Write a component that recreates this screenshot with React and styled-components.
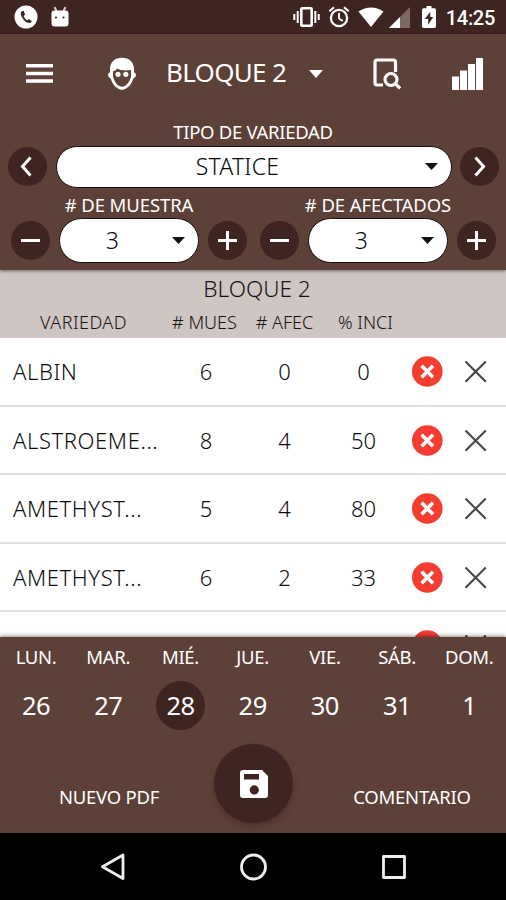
import styled, { createGlobalStyle } from "styled-components";

const rows = [
    { name: 'ALBIN', samples: 6, affected: 0, incidence: 0 },
    { name: 'ALSTROEME...', samples: 8, affected: 4, incidence: 50 },
    { name: 'AMETHYST...', samples: 5, affected: 4, incidence: 80 },
    { name: 'AMETHYST...', samples: 6, affected: 2, incidence: 33 },
    { name: '', samples: '', affected: '', incidence: '' }
];

const days = [
    { name: 'LUN.', number: 26 },
    { name: 'MAR.', number: 27 },
    { name: 'MIÉ.', number: 28, selected: true },
    { name: 'JUE.', number: 29 },
    { name: 'VIE.', number: 30 },
    { name: 'SÁB.', number: 31 },
    { name: 'DOM.', number: 1 }
];

const App = () => {
    return (
        <Screen>
            <GlobalStyle/>
            <StatusBar/>
            <TopPanel>
                <Toolbar/>
                <Caption>TIPO DE VARIEDAD</Caption>
                <VarietyRow>
                    <RoundButton><Glyph d="M22.5 10.5 L14.5 19.5 L22.5 28.5"/></RoundButton>
                    <Select $width={396} $height={42}>
                        <SelectText $shift={6}>STATICE</SelectText>
                        <Caret/>
                    </Select>
                    <RoundButton><Glyph d="M15.5 10.5 L23.5 19.5 L15.5 28.5"/></RoundButton>
                </VarietyRow>
                <CounterRow>
                    <Counter title="# DE MUESTRA" value={3}/>
                    <Counter title="# DE AFECTADOS" value={3}/>
                </CounterRow>
            </TopPanel>
            <VarietyTable/>
            <BottomPanel>
                <Week>
                    {days.map((day) => (
                        <Day key={day.name}>
                            <DayName>{day.name}</DayName>
                            <DayNumber $selected={day.selected}>{day.number}</DayNumber>
                        </Day>
                    ))}
                </Week>
                <Actions>
                    <Action $indent={4}>NUEVO PDF</Action>
                    <SaveButton>
                        <svg width="28" height="28" viewBox="0 0 28 28">
                            <path fill="#fff" fillRule="evenodd" d="M3 0 H22 L28 6 V25 Q28 28 25 28 H3 Q0 28 0 25 V3 Q0 0 3 0 Z M4 4 V9.5 H19 V4 Z M14.3 15.3 A4.6 4.6 0 1 0 14.3 24.5 A4.6 4.6 0 1 0 14.3 15.3 Z"/>
                        </svg>
                    </SaveButton>
                    <Action $indent={25}>COMENTARIO</Action>
                </Actions>
            </BottomPanel>
            <NavigationBar>
                <svg width="26" height="28" viewBox="0 0 26 28"><path d="M23 2 V25.5 L2.5 13.8 Z" {...line}/></svg>
                <svg width="28" height="28" viewBox="0 0 28 28"><circle cx="13.5" cy="14" r="12" {...line}/></svg>
                <svg width="26" height="26" viewBox="0 0 26 26"><rect x="2.5" y="2.5" width="21" height="21" {...line}/></svg>
            </NavigationBar>
        </Screen>
    )
}

const line = { fill: 'none', stroke: '#eee', strokeWidth: 2.8, strokeLinejoin: 'round' };

const StatusBar = () => {
    return (
        <StatusFrame>
            <svg width="24" height="24" viewBox="0 0 24 24">
                <circle cx="12" cy="12" r="11.5" fill="#fff"/>
                <path d="M8.2 6 C6.3 7 6.3 9.3 7.8 12 C10 16 13 18.3 15.7 18 C17 17.8 17.7 16.8 17.7 16 L14.8 14 L13.3 15.3 C11.8 14.5 10.3 12.8 9.6 11 L11 9.7 L9.8 6 Z" fill="#3e2723"/>
            </svg>
            <svg width="18" height="20" viewBox="0 0 18 20">
                <path d="M3.5 0 L5.5 4 M14.5 0 L12.5 4" stroke="#d8cdca" strokeWidth="2"/>
                <rect x="0.5" y="3.5" width="17" height="16" rx="3" fill="#fff"/>
                <circle cx="5" cy="10.5" r="1.1" fill="#3e2723"/>
                <circle cx="12.5" cy="10.5" r="1.1" fill="#3e2723"/>
            </svg>
            <StatusRight>
                <svg width="27" height="22" viewBox="0 0 27 22">
                    <path d="M1.3 8 V14 M4.7 5 V17 M22.3 5 V17 M25.7 8 V14" stroke="#fff" strokeWidth="2"/>
                    <rect x="8.3" y="2.2" width="10.4" height="17.6" rx="1" fill="none" stroke="#fff" strokeWidth="2.6"/>
                </svg>
                <svg width="22" height="22" viewBox="0 0 22 22" fill="none" stroke="#fff">
                    <circle cx="11" cy="12" r="8.1" strokeWidth="2.3"/>
                    <path d="M11 7 V12.5 L14.8 15" strokeWidth="1.9"/>
                    <path d="M1.3 5.3 L6 1.3 M20.7 5.3 L16 1.3" strokeWidth="2.1"/>
                </svg>
                <svg width="26" height="20" viewBox="0 0 26 20"><path d="M0.5 4.6 Q13 -3.8 25.5 4.6 L13 20 Z" fill="#fff"/></svg>
                <svg width="21" height="21" viewBox="0 0 21 21">
                    <path d="M21 0 V21 H0 Z" fill="#7c6a67"/>
                    <path d="M11 10 V21 H0 Z" fill="#fff"/>
                </svg>
                <svg width="14" height="22" viewBox="0 0 14 22">
                    <path d="M4.5 0 H9.5 V2.3 H12.5 Q14 2.3 14 4 V20.3 Q14 22 12.5 22 H1.5 Q0 22 0 20.3 V4 Q0 2.3 1.5 2.3 H4.5 Z" fill="#fff"/>
                    <path d="M8.3 5.8 L2.8 13 H6.2 V18.8 L11.3 11 H8.3 Z" fill="#3e2723"/>
                </svg>
                <Clock>14:25</Clock>
            </StatusRight>
        </StatusFrame>
    )
}

const Toolbar = () => {
    return (
        <ToolbarFrame>
            <svg width="27" height="22" viewBox="0 0 27 22"><path d="M0 2.7 H27 M0 10.4 H27 M0 18.1 H27" stroke="#fff" strokeWidth="3.5"/></svg>
            <FaceIcon width="30" height="34" viewBox="0 0 30 34">
                <path fill="#fff" fillRule="evenodd" d="M15 0.7 C22.5 0.7 27 5.5 27 12 V15.3 Q29 16 29 18 Q29 20.5 26.3 21.5 C25 27 20 32.7 15 32.7 C10 32.7 5 27 3.7 21.5 Q1 20.5 1 18 Q1 16 3 15.3 V12 C3 5.5 7.5 0.7 15 0.7 Z M10 11.5 C9.5 13 8 14 6 14.3 V19.5 C7.5 26 11.5 29.7 15 29.7 C18.5 29.7 22.5 26 24 19.5 V13 C18 14 13 13.3 10 11.5 Z"/>
                <circle cx="11" cy="17.3" r="2.6" fill="#fff"/>
                <circle cx="18.8" cy="17.3" r="2.6" fill="#fff"/>
            </FaceIcon>
            <BlockName>BLOQUE 2</BlockName>
            <svg width="14" height="8" viewBox="0 0 14 8"><path d="M0 0 H14 L7 8 Z" fill="#fff"/></svg>
            <SearchIcon width="28" height="32" viewBox="0 0 28 32" fill="none" stroke="#fff">
                <path d="M10 27 H4 Q2 27 2 25 V4 Q2 2 4 2 H20.5 Q22.5 2 22.5 4 V14" strokeWidth="3.2"/>
                <circle cx="18" cy="21.5" r="6" strokeWidth="3.2"/>
                <path d="M22.3 25.7 L27 30.3" strokeWidth="3.2"/>
            </SearchIcon>
            <svg width="31" height="32" viewBox="0 0 31 32" fill="#fff">
                <rect x="0" y="18.5" width="7" height="13.5"/>
                <rect x="8" y="12.5" width="7" height="19.5"/>
                <rect x="16" y="6" width="7" height="26"/>
                <rect x="24" y="0" width="7" height="32"/>
            </svg>
        </ToolbarFrame>
    )
}

const Glyph = ({ d }) => (
    <svg width="39" height="39" viewBox="0 0 39 39"><path d={d} fill="none" stroke="#fff" strokeWidth="3"/></svg>
)

const Caret = () => (
    <svg width="13" height="7" viewBox="0 0 13 7"><path d="M0 0 H13 L6.5 7 Z" fill="#111"/></svg>
)

const Counter = ({ title, value }) => {
    return (
        <CounterFrame>
            <CounterTitle>{title}</CounterTitle>
            <CounterControls>
                <RoundButton><Glyph d="M10 19.5 H29"/></RoundButton>
                <Select $width={140} $height={45}>
                    <SelectText $shift={7}>{value}</SelectText>
                    <Caret/>
                </Select>
                <RoundButton><Glyph d="M10 19.5 H29 M19.5 10 V29"/></RoundButton>
            </CounterControls>
        </CounterFrame>
    )
}

const VarietyTable = () => {
    return (
        <TableFrame>
            <TableHead>
                <TableTitle>BLOQUE 2</TableTitle>
                <HeadCells>
                    <HeadCell $spacing={0.45}>VARIEDAD</HeadCell>
                    <HeadCell># MUES</HeadCell>
                    <HeadCell># AFEC</HeadCell>
                    <HeadCell>% INCI</HeadCell>
                </HeadCells>
            </TableHead>
            {rows.map((row, i) => (
                <Row key={i}>
                    <NameCell>{row.name}</NameCell>
                    <NumberCell>{row.samples}</NumberCell>
                    <NumberCell>{row.affected}</NumberCell>
                    <NumberCell>{row.incidence}</NumberCell>
                    <svg width="32" height="32" viewBox="0 0 32 32">
                        <circle cx="16.3" cy="16.5" r="15.3" fill="#f43c30"/>
                        <path d="M10.6 10.8 L22 22.2 M22 10.8 L10.6 22.2" stroke="#fff" strokeWidth="3.6"/>
                    </svg>
                    <svg width="24" height="24" viewBox="0 0 24 24"><path d="M2.5 2.5 L22.8 22.8 M22.8 2.5 L2.5 22.8" stroke="#484848" strokeWidth="2.1"/></svg>
                </Row>
            ))}
        </TableFrame>
    )
}

const GlobalStyle = createGlobalStyle`
    * {
        box-sizing: border-box;
    }
    body {
        margin: 0;
        font-family: "Noto Sans", "Open Sans", sans-serif;
    }
    svg {
        display: block;
        flex: none;
    }
    button {
        border: none;
        padding: 0;
        font-family: inherit;
    }
`;

const Screen = styled.div`
    display: flex;
    flex-direction: column;
    width: 506px;
    height: 900px;
    overflow: hidden;
    background: #fff;
`;

const StatusFrame = styled.div`
    display: flex;
    align-items: center;
    flex: none;
    gap: 13px;
    height: 34px;
    padding: 0 11px 0 14px;
    background: #3e2522;
`;

const StatusRight = styled.div`
    display: flex;
    align-items: center;
    gap: 8px;
    margin-left: auto;

    svg:nth-child(4) {
        margin-left: -3px;
    }
    svg:nth-child(5) {
        margin-left: 4px;
    }
`;

const Clock = styled.span`
    width: 51px;
    padding-top: 2px;
    text-align: right;
    color: #fff;
    font: 500 20px/34px Roboto, sans-serif;
    letter-spacing: -0.3px;
`;

const TopPanel = styled.div`
    position: relative;
    z-index: 1;
    flex: none;
    height: 236px;
    background: #5d4037;
    box-shadow: 0 1px 3px rgba(0, 0, 0, 0.5);
`;

const ToolbarFrame = styled.div`
    display: flex;
    align-items: center;
    height: 79px;
    padding: 0 23px 0 26px;

    svg:last-child {
        margin-left: auto;
    }
`;

const FaceIcon = styled.svg`
    margin-left: 54px;
`;

const BlockName = styled.div`
    width: 142px;
    margin-left: 29px;
    margin-right: 1px;
    padding-bottom: 3px;
    color: #fff;
    font-size: 26px;
    letter-spacing: -0.7px;
    white-space: nowrap;
`;

const SearchIcon = styled.svg`
    margin-left: 50px;
`;

const Caption = styled.div`
    height: 33px;
    color: #fff;
    font-size: 18.5px;
    line-height: 38px;
    letter-spacing: -0.3px;
    text-align: center;
`;

const VarietyRow = styled.div`
    display: flex;
    align-items: center;
    justify-content: space-between;
    height: 41px;
    padding: 0 7px 0 8px;
`;

const RoundButton = styled.button`
    flex: none;
    width: 39px;
    height: 39px;
    border-radius: 50%;
    background: #3e2522;
`;

const Select = styled.div`
    display: flex;
    align-items: center;
    width: ${props => props.$width}px;
    height: ${props => props.$height}px;
    padding: 0 13px 0 0;
    border: 1.5px solid #1b0f0c;
    border-radius: 23px;
    background: #fff;
`;

const SelectText = styled.div`
    flex: 1;
    padding-right: ${props => props.$shift}px;
    padding-bottom: 1px;
    color: #080808;
    font-size: 23px;
    font-weight: 300;
    letter-spacing: 0.2px;
    text-align: center;
`;

const CounterRow = styled.div`
    display: flex;
    justify-content: space-between;
    padding: 0 10px 0 11px;
`;

const CounterFrame = styled.div`
    width: 236px;
`;

const CounterTitle = styled.div`
    height: 31px;
    color: #fff;
    font-size: 18.5px;
    line-height: 36px;
    letter-spacing: -0.1px;
    text-align: center;
`;

const CounterControls = styled.div`
    display: flex;
    align-items: center;
    justify-content: space-between;
    height: 45px;
`;

const TableFrame = styled.div`
    flex: none;
    height: 367px;
    overflow: hidden;
`;

const TableHead = styled.div`
    height: 68px;
    background: #cfc5c3;
    color: #151212;
    font-weight: 300;
`;

const TableTitle = styled.div`
    height: 38px;
    padding-left: 8px;
    font-size: 22.5px;
    line-height: 38px;
    letter-spacing: 0;
    text-align: center;
`;

const HeadCells = styled.div`
    display: grid;
    grid-template-columns: 167px 75px 85px 77px;
    line-height: 29px;
`;

const HeadCell = styled.div`
    font-size: 18px;
    letter-spacing: ${props => props.$spacing || 0}px;
    text-align: center;
    white-space: nowrap;
`;

const Row = styled.div`
    display: grid;
    grid-template-columns: 154px 78px 79px 79px 48px 47px;
    align-items: center;
    height: 68.5px;
    padding-left: 13px;
    border-bottom: 2px solid #dfdfdf;
    color: #0c0c0c;
    font-size: 22px;
    font-weight: 300;

    svg {
        justify-self: center;
    }
`;

const NameCell = styled.div`
    letter-spacing: 0.6px;
    white-space: nowrap;
`;

const NumberCell = styled.div`
    text-align: center;
`;

const BottomPanel = styled.div`
    position: relative;
    z-index: 1;
    flex: none;
    height: 196px;
    background: #5d4037;
    box-shadow: 0 -1px 4px rgba(0, 0, 0, 0.45);
    color: #fff;
`;

const Week = styled.div`
    display: grid;
    grid-template-columns: repeat(7, 72.2px);
    height: 107px;
`;

const Day = styled.div`
    display: flex;
    flex-direction: column;
    align-items: center;
`;

const DayName = styled.div`
    height: 44px;
    font-size: 18.5px;
    line-height: 40px;
    letter-spacing: -0.3px;
`;

const DayNumber = styled.div`
    width: 49px;
    height: 49px;
    border-radius: 50%;
    background: ${props => props.$selected ? '#3e2522' : 'transparent'};
    font-size: 25.5px;
    line-height: 49px;
    letter-spacing: -0.5px;
    text-align: center;
`;

const Actions = styled.div`
    display: grid;
    grid-template-columns: 214px 79px 213px;
`;

const Action = styled.div`
    padding-top: 41px;
    padding-left: ${props => props.$indent}px;
    font-size: 18.5px;
    line-height: 24px;
    letter-spacing: -0.25px;
    text-align: center;
`;

const SaveButton = styled.button`
    display: flex;
    align-items: center;
    justify-content: center;
    width: 79px;
    height: 79px;
    border-radius: 50%;
    background: #3e2522;
    box-shadow: 0 3px 6px rgba(0, 0, 0, 0.22);
`;

const NavigationBar = styled.div`
    display: flex;
    align-items: center;
    justify-content: space-between;
    flex: none;
    height: 67px;
    padding: 0 99px 0 100px;
    background: #000;
`;

export default App;
